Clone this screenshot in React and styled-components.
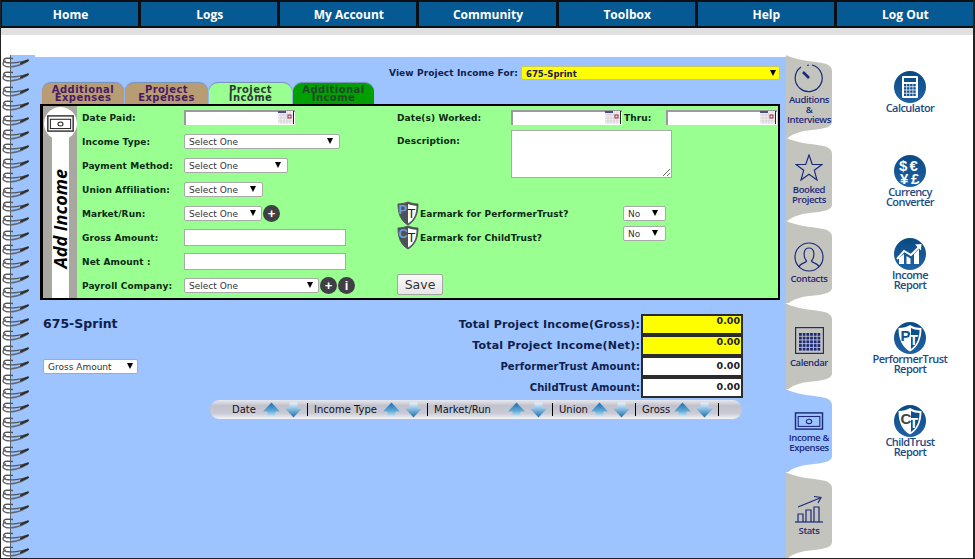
import React from 'react';
import styled, { createGlobalStyle } from 'styled-components';

const GlobalStyle = createGlobalStyle`
  html, body { margin: 0; padding: 0; background: #fff; }
  * { box-sizing: border-box; }
`;

const Page = styled.div`
  width: 975px;
  height: 559px;
  overflow: hidden;
  display: flex;
  flex-direction: column;
  background: #fff;
  border-left: 1px solid #222;
  border-right: 2px solid #222;
  border-bottom: 1px solid #222;
  font-family: "DejaVu Sans", Verdana, sans-serif;
`;

const NavBar = styled.nav`
  display: grid;
  grid-template-columns: repeat(7, 1fr);
  gap: 3px;
  height: 28px;
  padding: 2px 0 2px 1px;
  background: #0b0f14;
`;

const NavItem = styled.a`
  display: flex;
  align-items: center;
  justify-content: center;
  padding-left: 1px;
  background: #055a94;
  color: #fff;
  font: 700 12px "Open Sans", sans-serif;
`;

const GrayStrip = styled.div`
  height: 7px;
  background: #e0e0e0;
`;

const Book = styled.div`
  flex: 1;
  display: flex;
  min-height: 0;
  margin-top: 20px;
`;

const Spine = styled.div`
  width: 34px;
  flex: none;
  display: flex;
  flex-direction: column;
  overflow: hidden;
  padding-top: 1px;
  background: linear-gradient(90deg, #fff 9px, #56667a 9px, #56667a 10px, #9dc4ff 10px);
`;

const Main = styled.main`
  width: 751px;
  flex: none;
  margin-top: 2px;
  padding-top: 9px;
  background: #9dc4ff;
`;

const ViewRow = styled.div`
  display: flex;
  align-items: center;
  height: 14px;
  padding-left: 354px;
  gap: 4px;
  font-size: 9px;
  font-weight: 700;
  letter-spacing: 0.1px;
  color: #10204a;
`;

const ViewLabel = styled.span`
  width: 128px;
  flex: none;
  white-space: nowrap;
`;

const TabRow = styled.div`
  display: flex;
  gap: 1px;
  height: 21px;
  margin: 3px 0 0 7px;
`;

const FormTab = styled.div`
  width: ${p => p.$w}px;
  height: 23px;
  overflow: hidden;
  padding-top: 3px;
  border-radius: 9px 9px 0 0;
  background: ${p => p.$bg};
  color: ${p => p.$fg};
  box-shadow: 0 -1px 1px rgba(70, 80, 90, 0.45);
  text-align: center;
  font-size: 10px;
  font-weight: 700;
  line-height: 8px;
  letter-spacing: 0.45px;
`;

const Panel = styled.section`
  position: relative;
  display: flex;
  width: 740px;
  height: 196px;
  margin-left: 5px;
  border: 2px solid #000;
  border-left-width: 3px;
  background: #99ff90;
`;

const Strip = styled.div`
  width: 34px;
  flex: none;
  display: flex;
  flex-direction: column;
  align-items: center;
  background: #a8a8a0;
`;

const Badge = styled.div`
  width: 33px;
  height: 33px;
  flex: none;
  margin-top: 1px;
  display: flex;
  align-items: center;
  justify-content: center;
  border-radius: 50%;
  background: #fff;
`;

const Band = styled.div`
  flex: 1;
  width: 17px;
  margin-top: -3px;
  display: flex;
  justify-content: center;
  align-items: flex-end;
  padding-bottom: 29px;
  background: #fff;
`;

const StripTitle = styled.span`
  writing-mode: vertical-rl;
  transform: rotate(180deg);
  white-space: nowrap;
  font: italic 700 18px "Open Sans", sans-serif;
  line-height: 17px;
  color: #000;
`;

const FormBody = styled.div`
  flex: 1;
  display: grid;
  grid-template-columns: 315px 1fr;
  padding-left: 5px;
`;

const LeftFields = styled.div`
  display: grid;
  grid-template-rows: repeat(8, 24px);
  margin-top: -1px;
`;

const Label = styled.label`
  width: ${p => p.$w || 102}px;
  flex: none;
  font-size: 9px;
  font-weight: 700;
  letter-spacing: 0.1px;
  color: #0c2a12;
  white-space: nowrap;
`;

const Field = styled.div`
  display: flex;
  align-items: center;

  ${Label} {
    padding-top: 2px;
  }
`;

const SelectWrap = styled.span`
  position: relative;
  display: inline-block;
  flex: none;
  width: ${p => p.$w}px;
  height: ${p => p.$h || 15}px;

  &::after {
    content: '';
    position: absolute;
    right: ${p => p.$caret || 5}px;
    top: 4px;
    border-left: 3px solid transparent;
    border-right: 3px solid transparent;
    border-top: 6px solid #000;
    pointer-events: none;
  }
`;

const NativeSelect = styled.select`
  appearance: none;
  display: block;
  width: 100%;
  height: 100%;
  padding: 1px 0 0 4px;
  border: 1px solid ${p => (p.$yellow ? '#c9c860' : '#a9a9a9')};
  border-radius: 2px;
  background: ${p => (p.$yellow ? '#ffff00' : '#fff')};
  color: ${p => (p.$yellow ? '#20204a' : '#333')};
  font-family: "DejaVu Sans", sans-serif;
  font-size: ${p => (p.$yellow ? 8.5 : 9)}px;
  font-weight: ${p => (p.$yellow ? 700 : 400)};
`;

const TextField = styled.input`
  width: 162px;
  height: 17px;
  padding: 0 3px;
  border: 1px solid #a9a9a9;
  background: #fff;
`;

const DateWrap = styled.span`
  position: relative;
  display: inline-block;
  flex: none;
  width: 111px;
  height: 15px;
`;

const DateInput = styled.input`
  display: block;
  width: 100%;
  height: 100%;
  padding: 0 18px 0 2px;
  border: 0;
  border-top: 2px solid #9a9a9a;
  border-left: 2px solid #9a9a9a;
  background: #fff;
`;

const CalendarHolder = styled.span`
  position: absolute;
  right: 1px;
  top: 1px;
  display: flex;
`;

const RoundButton = styled.span`
  display: inline-flex;
  align-items: center;
  justify-content: center;
  flex: none;
  width: 17px;
  height: 17px;
  margin-left: ${p => p.$gap || 1}px;
  border-radius: 50%;
  background: #3f3f45;
  color: #fff;
  font: 700 13px "Liberation Sans", sans-serif;
  line-height: 1;
`;

const RightFields = styled.div`
  display: flex;
  flex-direction: column;
  padding-top: 4px;
`;

const DateRow = styled.div`
  display: flex;
  align-items: center;
  height: 15px;
`;

const ThruLabel = styled(Label)`
  width: 44px;
  padding-left: 2px;
`;

const DescRow = styled.div`
  display: flex;
  margin-top: 5px;
`;

const DescLabel = styled(Label)`
  padding-top: 6px;
`;

const DescBox = styled.textarea`
  width: 161px;
  height: 48px;
  border: 1px solid #a9a9a9;
  background: #fff;
`;

const EarmarkRow = styled.div`
  display: flex;
  align-items: center;
  height: 24px;
  margin-top: ${p => p.$top || 0}px;
`;

const EarmarkText = styled.span`
  width: 204px;
  flex: none;
  padding: 1px 0 0 1px;
  font-size: 9px;
  font-weight: 700;
  letter-spacing: 0.1px;
  color: #0c2a12;
  white-space: nowrap;
`;

const RaisedControl = styled.span`
  display: flex;
  margin-bottom: 7px;
`;

const SaveButton = styled.button`
  width: 46px;
  height: 21px;
  margin-top: 25px;
  padding: 0;
  border: 1px solid #a5a5a5;
  border-radius: 2px;
  background: linear-gradient(#fafafa, #e6e6e6);
  color: #333;
  font: 400 12.5px "DejaVu Sans", sans-serif;
`;

const Lower = styled.div`
  display: flex;
  margin-top: 14px;
  padding: 0 43px 0 8px;
`;

const LowerLeft = styled.div`
  display: flex;
  flex-direction: column;
  align-items: flex-start;
  gap: 28px;
  padding-top: 2px;
`;

const ProjectName = styled.div`
  font-size: 12.5px;
  font-weight: 700;
  color: #10204a;
`;

const Totals = styled.div`
  margin-left: auto;
  display: grid;
  grid-template-columns: auto 102px;
  grid-auto-rows: 21px;
  justify-items: end;
  align-items: center;
`;

const TotalLabel = styled.span`
  padding-right: 1px;
  font-size: ${p => (p.$big ? 11 : 10)}px;
  font-weight: 700;
  letter-spacing: ${p => (p.$big ? 0.18 : 0.1)}px;
  color: #10204a;
`;

const TotalValue = styled.span`
  width: 102px;
  height: 21px;
  padding: 0 1px 0 0;
  border: 2px solid #2b2b2b;
  background: ${p => (p.$yellow ? '#ffff00' : '#fff')};
  text-align: right;
  font-size: 9.5px;
  font-weight: 700;
  line-height: ${p => (p.$yellow ? 10 : 15)}px;
  color: #222;
`;

const SortBar = styled.div`
  display: flex;
  align-items: center;
  width: 532px;
  height: 19px;
  margin: 2px 0 0 175px;
  padding-left: 22px;
  border-radius: 9px;
  background: linear-gradient(#e8e8ee 0%, #c2c2ce 30%, #cacad6 70%, #f4f4f8 100%);
`;

const SortCell = styled.div`
  display: flex;
  align-items: center;
  justify-content: space-between;
  width: ${p => p.$w}px;
  height: 13px;
  margin-right: 6px;
  padding-right: 5px;
  border-right: 1px solid #000;
  font-size: 10px;
  color: #111;
`;

const ArrowPair = styled.span`
  display: flex;
  gap: 5px;
`;

const TabColumn = styled.div`
  width: 46px;
  flex: none;
  display: flex;
  flex-direction: column;
`;

const SideTab = styled.a`
  display: flex;
  flex-direction: column;
  align-items: center;
  height: ${p => p.$h}px;
  padding-top: ${p => p.$pt}px;
  background: ${p => (p.$active ? '#9dc4ff' : '#c4c4bf')};
  clip-path: path('M0 0 C10 5 24 6 36 8 C43 9 46 12 46 16 L46 ${p => p.$h - 16} C46 ${p => p.$h - 11} 38 ${p => p.$h - 9} 26 ${p => p.$h - 8} C14 ${p => p.$h - 7} 6 ${p => p.$h - 4} 2 ${p => p.$h} L0 ${p => p.$h} Z');
`;

const SideTabText = styled.span`
  margin-top: ${p => p.$gap}px;
  text-align: center;
  font: 600 9.5px/10px "Open Sans", sans-serif;
  letter-spacing: -0.4px;
  color: #1c2a78;
  white-space: pre-line;
`;

const ToolColumn = styled.aside`
  flex: 1;
  display: flex;
  flex-direction: column;
  align-items: center;
  padding: 16px 0 0 15px;
`;

const Tool = styled.a`
  display: flex;
  flex-direction: column;
  align-items: center;
  height: 83.5px;
`;

const ToolText = styled.span`
  text-align: center;
  font: 600 11px/10px "Open Sans", sans-serif;
  letter-spacing: -0.55px;
  color: #1d4a86;
  white-space: pre-line;
`;

const Ring = () => (
  <svg width="28" height="14.4" viewBox="0 0 28 14.4" style={{ flex: 'none', display: 'block' }}>
    <path d="M27 4C20 6.500 10 7.500 5 6.500C1.500 5.500 2 2.500 6 2.200L12 2.500" fill="none" stroke="#555" strokeWidth="1.3" />
    <path d="M27 5C20 10 10 11.500 5 10.500C1 9.500 1 6 5 5" fill="none" stroke="#666" strokeWidth="1.3" />
    <path d="M20 7.300L27 4.300" stroke="#2c2c2c" strokeWidth="2" strokeLinecap="round" />
  </svg>
);

const Calendar = () => (
  <CalendarHolder>
    <svg width="16" height="13" viewBox="0 0 16 13">
      <rect x="0" y="0" width="15" height="13" fill="#f2efee" />
      <path d="M3 0V13M6 0V13M9 0V13M12 0V13M0 4H15M0 7H15M0 10H15" stroke="#cfcfd4" strokeWidth="0.8" />
      <rect x="0" y="0" width="8" height="2" fill="#4d4d8c" />
      <rect x="10" y="4" width="3" height="3" fill="none" stroke="#a0304a" />
      <path d="M15.5 0V13" stroke="#222" />
    </svg>
  </CalendarHolder>
);

const DateBox = () => (
  <DateWrap>
    <DateInput type="text" />
    <Calendar />
  </DateWrap>
);

const Select = ({ w, h, caret, yellow, value }) => (
  <SelectWrap $w={w} $h={h} $caret={caret}>
    <NativeSelect $yellow={yellow} defaultValue={value}>
      <option>{value}</option>
    </NativeSelect>
  </SelectWrap>
);

const BillIcon = ({ w = 32, h = 20, color = '#222' }) => (
  <svg width={w} height={h} viewBox="0 0 32 20">
    <rect x="1" y="1" width="30" height="18" fill="none" stroke={color} strokeWidth="1.6" />
    <rect x="4" y="5" width="24" height="11" fill="none" stroke={color} strokeWidth="1.2" />
    <ellipse cx="16" cy="10.5" rx="3" ry="2.4" fill="none" stroke={color} strokeWidth="1.2" />
  </svg>
);

const SmallShield = ({ letter }) => (
  <svg width="22" height="25" viewBox="0 0 22 25" style={{ flex: 'none' }}>
    <path d="M1 3C5 3 8 2 11 1C14 2 17 3 21 3C21 13 18 20 11 24C4 20 1 13 1 3Z" fill="#4c5358" stroke="#555" />
    <path d="M11 3C14 4 16 4.500 19.500 5C19.500 13 17 19 11 22.500Z" fill="#fff" />
    <text x="1.500" y="13" fontFamily="Liberation Sans, sans-serif" fontWeight="700" fontSize="13" fill="#6f9bdf">{letter}</text>
    <text x="10.500" y="17" fontFamily="Liberation Sans, sans-serif" fontWeight="400" fontSize="13" fill="#222">T</text>
  </svg>
);

const Arrow = ({ up }) => (
  <svg width="17" height="16" viewBox="0 0 17 16">
    <defs>
      <linearGradient id={up ? 'arrUp' : 'arrDown'} x1="0" y1="0" x2="0" y2="1">
        {up ? (
          <>
            <stop offset="0" stopColor="#1f6ea8" />
            <stop offset="0.55" stopColor="#5ea6d6" />
            <stop offset="1" stopColor="#e6f3fb" />
          </>
        ) : (
          <>
            <stop offset="0" stopColor="#e6f3fb" />
            <stop offset="0.4" stopColor="#8fc3e6" />
            <stop offset="1" stopColor="#1f6ea8" />
          </>
        )}
      </linearGradient>
    </defs>
    <path
      d={up ? 'M8.500 0.500L17 9.500H12.500V15.500H4.500V9.500H0Z' : 'M4.500 0.500H12.500V6.500H17L8.500 15.500L0 6.500H4.500Z'}
      fill={`url(#${up ? 'arrUp' : 'arrDown'})`}
    />
  </svg>
);

const navy = '#1c2a78';

const tabIcons = {
  clock: (
    <svg width="30" height="30" viewBox="0 0 30 30" fill="none" stroke={navy} strokeWidth="1.2">
      <path d="M18 2A13.500 13.500 0 1 1 7 4" />
      <path d="M13 2.500L15 2" />
      <path d="M9 9L15 15" strokeWidth="2.6" />
    </svg>
  ),
  star: (
    <svg width="28" height="27" viewBox="0 0 28 27" fill="none" stroke={navy} strokeWidth="1.2">
      <path d="M14 1L17.300 10.500H27L19.300 16.300L22 26L14 20.300L6 26L8.700 16.300L1 10.500H10.700Z" />
    </svg>
  ),
  person: (
    <svg width="30" height="30" viewBox="0 0 30 30" fill="none" stroke={navy} strokeWidth="1.2">
      <circle cx="15" cy="15" r="14" />
      <path d="M5 25C6 21 12 21 12.500 19C9 15 9 6 15 6C21 6 21 15 17.500 19C18 21 24 21 25 25" />
    </svg>
  ),
  calendar: (
    <svg width="29" height="27" viewBox="0 0 29 27">
      <rect x="0.600" y="0.600" width="27.800" height="25.800" fill="none" stroke={navy} strokeWidth="1.2" />
      {Array.from({ length: 30 }).map((_, i) => (
        <rect key={i} x={4 + (i % 6) * 3.700} y={6 + Math.floor(i / 6) * 3.700} width="2.800" height="2.800" fill={navy} />
      ))}
    </svg>
  ),
  bill: <BillIcon w={32} h={18} color={navy} />,
  stats: (
    <svg width="29" height="28" viewBox="0 0 29 28" fill="none" stroke={navy} strokeWidth="1.2">
      <path d="M0 27H28" />
      <path d="M3 27V19H8V27M11 27V15H16V27M19 27V12H24V27" />
      <path d="M3 12L25 3" />
      <path d="M19 1.500L26 2.500L23 8" />
    </svg>
  ),
};

const Disc = ({ id, children }) => (
  <svg width="32" height="32" viewBox="0 0 32 32">
    <defs>
      <linearGradient id={id} x1="0" y1="0" x2="0" y2="1">
        <stop offset="0" stopColor="#0a4a82" />
        <stop offset="1" stopColor="#1f62a6" />
      </linearGradient>
    </defs>
    <circle cx="16" cy="16" r="16" fill={`url(#${id})`} />
    {children}
  </svg>
);

const TrustShield = ({ letter }) => (
  <>
    <path d="M4.500 6C9 6 13 5 16 3C19 5 23 6 27.500 6C27.500 17 24 25 16 29.500C8 25 4.500 17 4.500 6Z" fill="#fff" />
    <path d="M17 6C19 7 22 8 25.500 8C25.500 16 23 23 17 27Z" fill="#0f4f8c" />
    <text x="6.500" y="19" fontFamily="Liberation Sans, sans-serif" fontWeight="700" fontSize="15" fill={letter === 'P' ? '#0f4f8c' : '#444'}>{letter}</text>
    <text x="15.500" y="23" fontFamily="Liberation Sans, sans-serif" fontWeight="700" fontSize="14" fill="#fff">T</text>
  </>
);

const toolIcons = {
  calculator: (
    <Disc id="d1">
      <rect x="8" y="5" width="16" height="22" rx="1" fill="#fff" />
      <rect x="10" y="7" width="12" height="4" fill="#0f4f8c" />
      {Array.from({ length: 16 }).map((_, i) => (
        <rect key={i} x={10 + (i % 4) * 3.100} y={13 + Math.floor(i / 4) * 3.200} width="2.400" height="2.400" fill="#0f4f8c" />
      ))}
    </Disc>
  ),
  currency: (
    <Disc id="d2">
      <g fontFamily="Liberation Sans, sans-serif" fontWeight="700" fontSize="15" fill="#fff">
        <text x="5" y="15.500">$</text>
        <text x="15.500" y="15.500">€</text>
        <text x="6" y="29">¥</text>
        <text x="17" y="29">£</text>
      </g>
    </Disc>
  ),
  income: (
    <Disc id="d3">
      <path d="M3 21L10 13L17 17L26 8" fill="none" stroke="#fff" strokeWidth="2" />
      <path d="M21 6.500L27.500 6L27 12.500Z" fill="#fff" />
      <path d="M5 26V20L10 16V26ZM12.500 26V18L16.500 20.500V26ZM20 26V16L25 11V26Z" fill="#fff" />
    </Disc>
  ),
  pt: <Disc id="d4"><TrustShield letter="P" /></Disc>,
  ct: <Disc id="d5"><TrustShield letter="C" /></Disc>,
};

const navLinks = ['Home', 'Logs', 'My Account', 'Community', 'Toolbox', 'Help', 'Log Out'];

const formTabs = [
  { w: 82, bg: '#b89c74', fg: '#4a1a66', lines: ['Additional', 'Expenses'] },
  { w: 83, bg: '#b89c74', fg: '#4a1a66', lines: ['Project', 'Expenses'] },
  { w: 83, bg: '#99ff90', fg: '#2c3a3a', lines: ['Project', 'Income'] },
  { w: 81, bg: '#00a000', fg: '#1f4a2a', lines: ['Additional', 'Income'] },
];

const sideTabs = [
  { icon: 'clock', text: 'Auditions\n&\nInterviews', h: 83, pt: 8, gap: 2 },
  { icon: 'star', text: 'Booked\nProjects', h: 83, pt: 16, gap: 4 },
  { icon: 'person', text: 'Contacts', h: 83, pt: 21, gap: 2 },
  { icon: 'calendar', text: 'Calendar', h: 86, pt: 24, gap: 4 },
  { icon: 'bill', text: 'Income &\nExpenses', h: 83, pt: 23, gap: 3, active: true },
  { icon: 'stats', text: 'Stats', h: 86, pt: 23, gap: 3 },
];

const tools = [
  { icon: 'calculator', text: 'Calculator' },
  { icon: 'currency', text: 'Currency\nConverter' },
  { icon: 'income', text: 'Income\nReport' },
  { icon: 'pt', text: 'PerformerTrust\nReport' },
  { icon: 'ct', text: 'ChildTrust\nReport' },
];

const totals = [
  { label: 'Total Project Income(Gross):', big: true, yellow: true },
  { label: 'Total Project Income(Net):', big: true, yellow: true },
  { label: 'PerformerTrust Amount:' },
  { label: 'ChildTrust Amount:' },
];

const sortCols = [
  { label: 'Date', w: 76 },
  { label: 'Income Type', w: 114 },
  { label: 'Market/Run', w: 119 },
  { label: 'Union', w: 77 },
  { label: 'Gross', w: 77 },
];

export default function App() {
  return (
    <>
      <GlobalStyle />
      <Page>
        <NavBar>
          {navLinks.map(link => <NavItem key={link}>{link}</NavItem>)}
        </NavBar>
        <GrayStrip />
        <Book>
          <Spine>
            {Array.from({ length: 35 }).map((_, i) => <Ring key={i} />)}
          </Spine>
          <Main>
            <ViewRow>
              <ViewLabel>View Project Income For:</ViewLabel>
              <Select w={259} h={14} caret={4} yellow value="675-Sprint" />
            </ViewRow>
            <TabRow>
              {formTabs.map(tab => (
                <FormTab key={tab.lines.join()} $w={tab.w} $bg={tab.bg} $fg={tab.fg}>
                  {tab.lines[0]}<br />{tab.lines[1]}
                </FormTab>
              ))}
            </TabRow>
            <Panel>
              <Strip>
                <Badge><BillIcon w={27} h={17} /></Badge>
                <Band><StripTitle>Add Income</StripTitle></Band>
              </Strip>
              <FormBody>
                <LeftFields>
                  <Field><Label>Date Paid:</Label><DateBox /></Field>
                  <Field><Label>Income Type:</Label><Select w={156} value="Select One" caret={7} /></Field>
                  <Field><Label>Payment Method:</Label><Select w={104} value="Select One" caret={7} /></Field>
                  <Field><Label>Union Affiliation:</Label><Select w={79} value="Select One" caret={7} /></Field>
                  <Field>
                    <Label>Market/Run:</Label>
                    <Select w={78} value="Select One" caret={6} />
                    <RoundButton>+</RoundButton>
                  </Field>
                  <Field><Label>Gross Amount:</Label><TextField /></Field>
                  <Field><Label>Net Amount :</Label><TextField /></Field>
                  <Field>
                    <Label>Payroll Company:</Label>
                    <Select w={135} value="Select One" caret={6} />
                    <RoundButton>+</RoundButton>
                    <RoundButton>i</RoundButton>
                  </Field>
                </LeftFields>
                <RightFields>
                  <DateRow>
                    <Label $w={114}>Date(s) Worked:</Label>
                    <DateBox />
                    <ThruLabel>Thru:</ThruLabel>
                    <DateBox />
                  </DateRow>
                  <DescRow>
                    <DescLabel $w={114}>Description:</DescLabel>
                    <DescBox />
                  </DescRow>
                  <EarmarkRow $top={23}>
                    <SmallShield letter="P" />
                    <EarmarkText>Earmark for PerformerTrust?</EarmarkText>
                    <Select w={43} value="No" caret={8} />
                  </EarmarkRow>
                  <EarmarkRow>
                    <SmallShield letter="C" />
                    <EarmarkText>Earmark for ChildTrust?</EarmarkText>
                    <RaisedControl><Select w={43} value="No" caret={8} /></RaisedControl>
                  </EarmarkRow>
                  <SaveButton>Save</SaveButton>
                </RightFields>
              </FormBody>
            </Panel>
            <Lower>
              <LowerLeft>
                <ProjectName>675-Sprint</ProjectName>
                <Select w={95} value="Gross Amount" caret={5} />
              </LowerLeft>
              <Totals>
                {totals.map(row => (
                  <React.Fragment key={row.label}>
                    <TotalLabel $big={row.big}>{row.label}</TotalLabel>
                    <TotalValue $yellow={row.yellow}>0.00</TotalValue>
                  </React.Fragment>
                ))}
              </Totals>
            </Lower>
            <SortBar>
              {sortCols.map(col => (
                <SortCell key={col.label} $w={col.w}>
                  {col.label}
                  <ArrowPair><Arrow up /><Arrow /></ArrowPair>
                </SortCell>
              ))}
            </SortBar>
          </Main>
          <TabColumn>
            {sideTabs.map(tab => (
              <SideTab key={tab.icon} $h={tab.h} $pt={tab.pt} $active={tab.active}>
                {tabIcons[tab.icon]}
                <SideTabText $gap={tab.gap}>{tab.text}</SideTabText>
              </SideTab>
            ))}
          </TabColumn>
          <ToolColumn>
            {tools.map(tool => (
              <Tool key={tool.icon}>
                {toolIcons[tool.icon]}
                <ToolText>{tool.text}</ToolText>
              </Tool>
            ))}
          </ToolColumn>
        </Book>
      </Page>
    </>
  );
}
